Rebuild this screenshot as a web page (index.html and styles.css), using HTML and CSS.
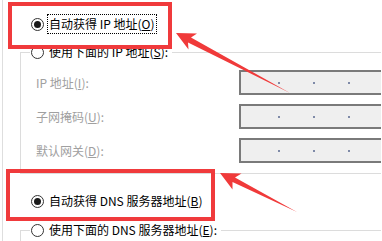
FILE: index.html
```html
<!DOCTYPE html>
<html lang="zh-CN">
<head>
<meta charset="utf-8">
<link rel="stylesheet" href="styles.css">
</head>
<body>
<div class="page">
  <div class="radio-row first">
    <span class="radio checked"></span>
    <span class="label focus">自动获得 IP 地址(<u>O</u>)</span>
  </div>
  <fieldset class="group ip">
    <legend class="radio-row">
      <span class="radio"></span>
      <span class="label">使用下面的 IP 地址(<u>S</u>):</span>
    </legend>
    <div class="field">
      <span class="flabel">IP 地址(<u>I</u>):</span>
      <div class="ipbox"><i></i><i></i><i></i></div>
    </div>
    <div class="field">
      <span class="flabel">子网掩码(<u>U</u>):</span>
      <div class="ipbox"><i></i><i></i><i></i></div>
    </div>
    <div class="field">
      <span class="flabel">默认网关(<u>D</u>):</span>
      <div class="ipbox"><i></i><i></i><i></i></div>
    </div>
  </fieldset>
  <div class="radio-row dns">
    <span class="radio checked"></span>
    <span class="label">自动获得 DNS 服务器地址(<u>B</u>)</span>
  </div>
  <fieldset class="group dns2">
    <legend class="radio-row">
      <span class="radio"></span>
      <span class="label">使用下面的 DNS 服务器地址(<u>E</u>):</span>
    </legend>
    <div class="spacer"></div>
  </fieldset>

  <div class="mark mark1"></div>
  <div class="mark mark2"></div>
  <svg class="arrows" width="382" height="241" viewBox="0 0 382 241">
    <polygon points="176,33 197,33.5 191,37.5 290,93 188,42.5 188.5,49.5" fill="#f03a3a"/>
    <polygon points="220,173 241.5,173.5 235,177.5 297,212 232.5,182 232.5,189.5" fill="#f03a3a"/>
  </svg>
</div>
</body>
</html>
```
FILE: styles.css
```css
html, body {
  margin: 0;
  padding: 0;
  background: #fff;
}
.page {
  position: relative;
  width: 379px;
  height: 241px;
  margin-left: 2px;
  border-left: 1px solid #dedede;
  overflow: hidden;
  font-family: "Noto Sans CJK SC", "Microsoft YaHei", sans-serif;
  font-size: 12px;
  color: #000;
  padding-top: 14px;
  box-sizing: border-box;
}
.radio-row {
  display: flex;
  align-items: center;
  height: 20px;
  padding-left: 28px;
  box-sizing: border-box;
}
.radio {
  width: 13px;
  height: 13px;
  box-sizing: border-box;
  border: 1px solid #333;
  border-radius: 50%;
  background: #fff;
  display: flex;
  align-items: center;
  justify-content: center;
  flex: none;
}
.radio.checked::after {
  content: "";
  width: 7px;
  height: 7px;
  border-radius: 50%;
  background: #1a1a1a;
}
.label {
  margin-left: 3px;
  padding: 0 1px;
  line-height: 18px;
  white-space: nowrap;
  border: 1px solid transparent;
}
.label.focus {
  border: 1px dotted #000;
}
.group {
  margin: 8px 0 0 17px;
  padding: 8px 0 10px 15px;
  width: 600px;
  border: 1px solid #dcdcdc;
  box-sizing: border-box;
}
.group legend.radio-row {
  padding: 0 2px 0 1px;
  margin-left: -6px;
  background: #fff;
}
.group.dns2 legend.radio-row {
  margin-left: 9px;
}
.field {
  display: grid;
  grid-template-columns: 203px 160px;
  height: 25px;
  align-items: center;
}
.field + .field {
  margin-top: 9px;
}
.flabel {
  color: #a0a0a0;
  line-height: 25px;
  white-space: nowrap;
}
.ipbox {
  height: 25px;
  box-sizing: border-box;
  border: 2px solid #7a7a7a;
  background: #efefef;
  display: flex;
  align-items: center;
  padding-left: 37px;
  gap: 33px;
}
.ipbox i {
  display: block;
  width: 2px;
  height: 2px;
  background: #7f8aa8;
}
.radio-row.dns {
  margin-top: 17px;
}
.group.dns2 {
  margin-top: 9px;
  padding: 0;
}
.spacer {
  height: 40px;
}
.mark {
  position: absolute;
  border: 4px solid #f03a3c;
  box-sizing: border-box;
}
.mark1 {
  left: 5px;
  top: 2px;
  width: 164px;
  height: 47px;
}
.mark2 {
  left: 3px;
  top: 169px;
  width: 209px;
  height: 52px;
}
.arrows {
  position: absolute;
  left: -3px;
  top: 0;
}
```
